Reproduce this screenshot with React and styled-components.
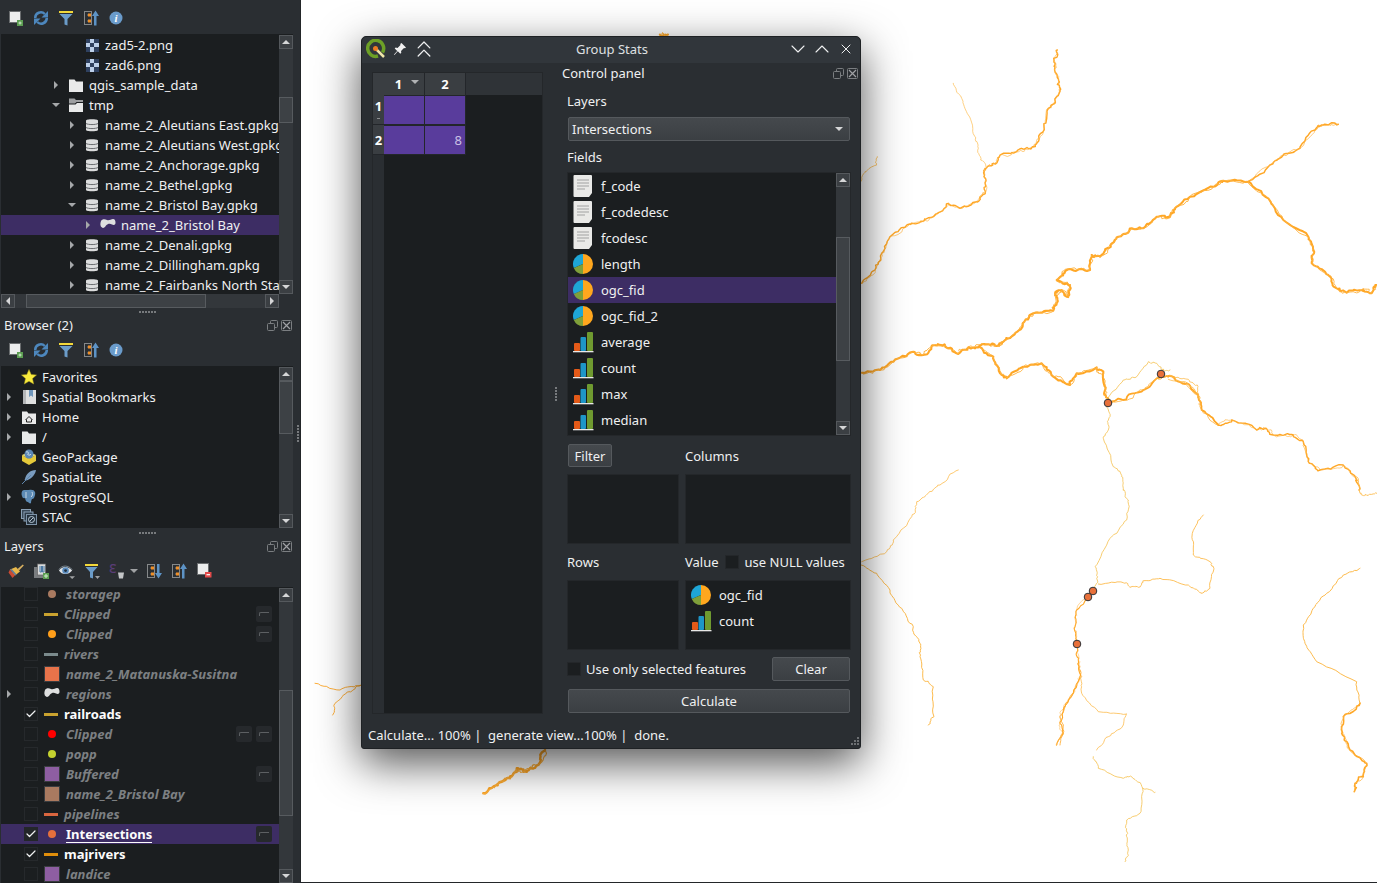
import React from "react";
import styled, { createGlobalStyle, css } from "styled-components";
import { ChevronDown, ChevronUp, ChevronsUp, X, Check } from "lucide-react";

const Global = createGlobalStyle`
  html, body { margin: 0; padding: 0; background: #2a2e32; overflow: hidden; }
  body { font-family: "Noto Sans", "Open Sans", sans-serif; font-size: 13px; color: #eff0f1; }
  * { box-sizing: border-box; }
`;

const Page = styled.div`display: flex; width: 1377px; height: 883px; overflow: hidden;`;

/* ---------- sidebar ---------- */
const Sidebar = styled.aside`display: flex; width: 300px; height: 883px; flex-shrink: 0; background: #2a2e32;`;
const Docks = styled.div`display: flex; flex-direction: column; width: 293px; padding-left: 1px;`;
const SideHandle = styled.div`display: flex; align-items: center; justify-content: flex-end; width: 7px; padding: 0 1px 15px 0;`;
const VDots = styled.div`
  width: 2px; height: ${p => p.$h}px;
  background: repeating-linear-gradient(180deg, #777a7d 0 2px, transparent 2px 3px);
`;
const Splitter = styled.div`display: flex; justify-content: center; align-items: center; height: ${p => p.$h}px; padding-right: 0;`;
const HDots = styled.div`width: 17px; height: 2px; background: repeating-linear-gradient(90deg, #777a7d 0 2px, transparent 2px 3px);`;
const DockTitle = styled.div`
  display: flex; align-items: center; justify-content: space-between; height: ${p => p.$h}px;
  padding: 0 1px 0 3px; line-height: 18px;
`;
const DockButtons = styled.div`display: flex; gap: 3px;`;
const Toolbar = styled.div`display: flex; align-items: center; gap: 9px; height: ${p => p.$h}px; padding: ${p => p.$pt || 0}px 0 0 7px; flex-shrink: 0;`;
const Caret = styled.span`
  width: 0; height: 0; margin: 0 -1px 0 -4px; border-left: 4px solid transparent; border-right: 4px solid transparent;
  border-top: 4px solid #a0a2a4;
`;
const Panel = styled.div`display: flex; height: ${p => p.$h}px; flex-shrink: 0; background: #1b1e20; overflow: hidden;`;
const List = styled.div`flex: 1; min-width: 0; overflow: hidden; padding-top: ${p => p.$top || 0}px; margin-top: ${p => p.$shift || 0}px;`;
const Row = styled.div`
  display: flex; align-items: center; height: 20px; line-height: 20px; padding-left: ${p => p.$pad}px; white-space: nowrap;
  background: ${p => (p.$sel ? "#3d2d64" : "transparent")};
  color: #eff0f1;
`;
const Arrow = styled.span`
  display: flex; align-items: center; justify-content: center; width: 16px; height: 16px; flex-shrink: 0;
  &::before {
    content: ""; display: ${p => (p.$kind ? "block" : "none")}; width: 0; height: 0; margin-right: 2px;
    ${p => p.$kind === "right" && css`border-top: 4px solid transparent; border-bottom: 4px solid transparent; border-left: 4px solid #a6a8aa;`}
    ${p => p.$kind === "down" && css`border-left: 4px solid transparent; border-right: 4px solid transparent; border-top: 4px solid #a6a8aa;`}
  }
`;
const RowIcon = styled.span`display: flex; width: 16px; height: 16px; margin: 0 5px 0 3px; flex-shrink: 0;`;

/* scrollbars */
const VBar = styled.div`display: flex; flex-direction: column; width: 14px; flex-shrink: 0; padding-top: 1px; background: #1b1e20;`;
const BarBtn = styled.div`
  display: flex; align-items: center; justify-content: center; width: 14px; height: 14px; flex-shrink: 0;
  background: #3b3f43; border: 1px solid #55595d;
`;
const UpTri = styled.span`width: 0; height: 0; border-left: 4px solid transparent; border-right: 4px solid transparent; border-bottom: 4px solid #d5d6d7;`;
const DownTri = styled.span`width: 0; height: 0; border-left: 4px solid transparent; border-right: 4px solid transparent; border-top: 4px solid #d5d6d7;`;
const LeftTri = styled.span`width: 0; height: 0; border-top: 4px solid transparent; border-bottom: 4px solid transparent; border-right: 4px solid #d5d6d7;`;
const RightTri = styled.span`width: 0; height: 0; border-top: 4px solid transparent; border-bottom: 4px solid transparent; border-left: 4px solid #d5d6d7;`;
const VTrack = styled.div`flex: 1; background: #33373b; min-height: 0; padding-top: ${p => p.$before}px;`;
const VThumb = styled.div`height: ${p => p.$size}px; background: #3d4145; border: 1px solid #575b5f;`;
const HBar = styled.div`display: flex; height: 14px; flex-shrink: 0; width: 278px; background: #33373b;`;
const HTrack = styled.div`flex: 1; padding-left: ${p => p.$before}px;`;
const HThumb = styled.div`width: ${p => p.$size}px; height: 14px; background: #3d4145; border: 1px solid #575b5f;`;

const Scroll = ({ before, size }) => (
  <VBar>
    <BarBtn><UpTri /></BarBtn>
    <VTrack $before={before}><VThumb $size={size} /></VTrack>
    <BarBtn><DownTri /></BarBtn>
  </VBar>
);

/* layers */
const LayerRow = styled(Row)`
  padding-left: 1px; padding-right: 7px;
  font-weight: 700; font-style: ${p => (p.$on ? "normal" : "italic")};
  color: ${p => (p.$on ? "#fcfcfc" : "#7d8083")};
`;
const Box = styled.span`
  display: flex; align-items: center; justify-content: center; width: 14px; height: 14px; margin: 0 6px 0 6px; flex-shrink: 0;
  background: ${p => (p.$sel ? "#232629" : "#1b1e20")}; border: 1px solid ${p => (p.$sel ? "#232629" : "#26292c")}; color: #eff0f1;
`;
const SymBox = styled.span`display: flex; align-items: center; width: ${p => (p.$line ? 20 : 22)}px; height: 16px; flex-shrink: 0;`;
const SymLine = styled.span`width: 14px; height: 3px; background: ${p => p.$c};`;
const SymDot = styled.span`width: 8px; height: 8px; margin-left: 4px; border-radius: 50%; background: ${p => p.$c};`;
const SymSquare = styled.span`width: 16px; height: 16px; background: ${p => p.$c}; border: 1px solid #3a3d40;`;
const LayerName = styled.span`${p => p.$active && css`border-bottom: 1px solid #fcfcfc; line-height: 16px; height: 17px; margin-top: 1px;`}`;
const Indicators = styled.span`display: flex; gap: 4px; margin-left: auto;`;
const Indicator = styled.span`
  display: flex; align-items: center; justify-content: center; width: 16px; height: 16px; border-radius: 2px; background: #26292c;
`;
const IndMark = styled.span`width: 10px; height: 4px; border: 1px solid #5d6063; border-width: 1px 0 0 1px; border-top-left-radius: 2px;`;

/* ---------- map ---------- */
const MapCanvas = styled.main`position: relative; flex: 1; height: 883px; background: #fff; border-left: 1px solid #232629; border-bottom: 1px solid #232629;`;
const MapSvg = styled.svg`display: block;`;

/* ---------- dialog ---------- */
const Dialog = styled.section`
  position: absolute; left: 60px; top: 36px; width: 500px; height: 713px; display: flex; flex-direction: column;
  background: #2a2e32; border-radius: 5px 5px 3px 3px; border: 1px solid #1e2124;
  box-shadow: 0 14px 44px rgba(0, 0, 0, .68);
`;
const TitleBar = styled.header`
  display: grid; grid-template-columns: 1fr auto 1fr; align-items: center; height: 26px; flex-shrink: 0; padding: 0 2px 2px 4px;
  background: #31363b; border-radius: 5px 5px 0 0;
`;
const TitleLeft = styled.div`display: flex; align-items: center; gap: 7px;`;
const TitleRight = styled.div`display: flex; align-items: center; justify-content: flex-end; color: #eff0f1;`;
const TitleBtn = styled.span`display: flex; align-items: center; justify-content: center; width: 24px; height: 24px;`;
const ShadeBtn = styled.span`display: flex; width: 28px; height: 24px; align-items: center; margin-left: -4px; color: #eff0f1;`;
const TitleText = styled.div`color: #dfe0e1;`;
const DialogBody = styled.div`display: flex; flex: 1; min-height: 0;`;
const TablePane = styled.div`
  display: grid; grid-template-columns: 11px 41px 41px 1fr; grid-template-rows: 22px 30px 30px 1fr;
  gap: 0; width: 171px; height: 642px; margin: 9px 0 0 10px; background: #1b1e20; border: 1px solid #24272a; flex-shrink: 0;
`;
const ColHead = styled.div`
  position: relative; display: flex; align-items: center; justify-content: center; font-weight: 700; background: #3a3e42; border-right: 1px solid #23262a; color: #fcfcfc;
  grid-column: ${p => p.$span || "auto"};
`;
const SortTri = styled.span`position: absolute; right: 5px; top: 7px; width: 0; height: 0; border-left: 4px solid transparent; border-right: 4px solid transparent; border-top: 4px solid #b0b2b4;`;
const HeadRest = styled.div`background: #2f3337;`;
const RowHead = styled.div`
  position: relative; display: flex; align-items: center; justify-content: center; font-weight: 700; background: #3a3e42; border-bottom: 1px solid #23262a; color: #fcfcfc; font-size: 13px;
  padding-bottom: ${p => (p.$sorted ? 8 : 0)}px;
  ${p => p.$sorted && css`
    &::after { content: ""; position: absolute; left: 4px; bottom: 5px; width: 3px; height: 1px; background: #8a8c8e; }
  `}
`;
const Cell = styled.div`
  display: flex; align-items: center; justify-content: flex-end; padding-right: 3px; background: #593c9c; color: #c9c0e4;
  border-right: 1px solid #23262a; border-bottom: 1px solid #23262a; border-top: 1px solid #23262a;
`;
const Gap = styled.div`grid-column: 4; grid-row: 2 / 5;`;
const HeadCol = styled.div`grid-column: 1; grid-row: 4; background: #2a2e32;`;
const MidHandle = styled.div`display: flex; align-items: center; justify-content: flex-start; width: 19px; padding: 14px 0 0 12px;`;
const ControlPane = styled.div`display: flex; flex-direction: column; width: 297px;`;
const PaneTitle = styled.div`display: flex; align-items: center; justify-content: space-between; height: 20px; padding-right: 1px; flex-shrink: 0;`;
const Content = styled.div`display: flex; flex-direction: column; padding-left: 5px; width: 289px; flex-shrink: 0;`;
const Label = styled.div`height: 18px; line-height: 18px; margin-top: ${p => p.$mt}px;`;
const Combo = styled.div`
  display: flex; align-items: center; justify-content: space-between; height: 24px; margin: 7px 1px 0; padding: 0 6px 0 3px;
  border-radius: 2px; border: 1px solid #55595d; background: linear-gradient(#45494d, #3b3f43);
`;
const FieldList = styled.div`display: flex; height: 264px; margin-top: 6px; background: #1b1e20; border: 1px solid #24272a; overflow: hidden;`;
const FieldRows = styled.div`flex: 1; min-width: 0;`;
const FieldRow = styled.div`
  display: flex; align-items: center; gap: 7px; height: 26px; padding-left: 4px; background: ${p => (p.$sel ? "#3d2d64" : "transparent")};
`;
const ListBar = styled(VBar)`padding-top: 0; margin-right: 0;`;
const TwoCol = styled.div`display: grid; grid-template-columns: 112px 166px; column-gap: 6px; margin-top: ${p => p.$mt}px; width: 284px; align-items: center;`;
const Btn = styled.button`
  height: ${p => p.$h || 24}px; width: ${p => (p.$w ? `${p.$w}px` : "auto")}; padding: 0; margin: 0; font: inherit; color: #eff0f1;
  border-radius: 2px; border: 1px solid #55595d; background: linear-gradient(#45494d, #3b3f43);
`;
const FilterBtn = styled(Btn)`margin-left: 1px;`;
const WellBox = styled.div`height: 70px; background: #1b1e20; border: 1px solid #24272a; padding: ${p => (p.$pad ? "1px 0 0 4px" : 0)};`;
const WellRow = styled.div`display: flex; align-items: center; gap: 7px; height: 26px;`;
const ValueHead = styled.div`display: flex; align-items: center; height: 18px;`;
const SmallBox = styled.span`
  display: inline-block; width: 14px; height: 14px; flex-shrink: 0; background: #1b1e20; border: 1px solid #24272a; margin: ${p => p.$m};
`;
const OptionsRow = styled.div`display: flex; align-items: center; height: 24px; margin: 7px 1px 0 0;`;
const ClearBtn = styled(Btn)`margin-left: auto;`;
const CalcBtn = styled(Btn)`margin: 8px 1px 0; flex-shrink: 0;`;
const StatusBar = styled.footer`position: relative; display: flex; align-items: center; height: 36px; padding: 10px 0 0 6px; flex-shrink: 0; white-space: pre;`;
const Grip = styled.svg`position: absolute; right: 1px; bottom: 1px;`;

/* ---------- icons ---------- */
const Ic = styled.svg`display: block; flex-shrink: 0;`;
const I = ({ children, s = 16, vb = "0 0 16 16" }) => <Ic width={s} height={s} viewBox={vb}>{children}</Ic>;

const AddIcon = () => (
  <I>
    <rect x="1.5" y="1.5" width="11" height="11" fill="#eceded" stroke="#6b6e70" />
    <rect x="9" y="10" width="6" height="6" fill="#5c9e52" />
    <path d="M10.5 13h3M12 11.5v3" stroke="#d5ecd0" strokeWidth="1" />
  </I>
);
const RefreshIcon = () => (
  <I>
    <path d="M2.2 8A5.6 5.6 0 0 1 11.800 4" fill="none" stroke="#4d87bd" strokeWidth="2.500" />
    <path d="M15 1v6.500H8.500z" fill="#4d87bd" />
    <path d="M13.800 8A5.600 5.600 0 0 1 4.200 12" fill="none" stroke="#4d87bd" strokeWidth="2.500" />
    <path d="M1 15V8.500h6.500z" fill="#4d87bd" />
  </I>
);
const FilterIcon = () => (
  <I>
    <rect x="1" y="1" width="14" height="2" fill="#f2d83a" />
    <path d="M1.5 4h13L9.5 9v6.5l-3-1V9z" fill="#6b9cc9" />
  </I>
);
const CollapseIcon = ({ down }) => (
  <I>
    <rect x="1.500" y="1.500" width="7" height="13" fill="none" stroke="#85888a" strokeWidth="1" />
    <path d="M4 5h2M4 11h2" stroke="#85888a" />
    <rect x="5" y="3.500" width="3" height="3" fill="#ef8f28" />
    <rect x="5" y="9.500" width="3" height="3" fill="#ef8f28" />
    {down
      ? <path d="M11 1h2.500v9H16l-3.500 5.500L9 10h2z" fill="#5d93c6" />
      : <path d="M12.500 .5L16 6h-2.500v9.500H11V6H9z" fill="#5d93c6" />}
  </I>
);
const InfoIcon = () => (
  <I>
    <circle cx="8" cy="8" r="6.5" fill="#6a9bcb" />
    <text x="8" y="12" textAnchor="middle" fontFamily="Liberation Serif" fontStyle="italic" fontWeight="700" fontSize="11" fill="#fff">i</text>
  </I>
);
const FloatIcon = () => (
  <I s={11} vb="0 0 11 11">
    <rect x="3.5" y=".5" width="7" height="7" rx="1" fill="none" stroke="#7b7e81" />
    <rect x=".5" y="3.5" width="7" height="7" rx="1" fill="#2a2e32" stroke="#7b7e81" />
  </I>
);
const CloseBox = () => (
  <I s={11} vb="0 0 11 11">
    <rect x=".5" y=".5" width="10" height="10" rx="1" fill="none" stroke="#7b7e81" />
    <path d="M2 2l7 7M9 2l-7 7" stroke="#a0a2a5" strokeWidth="1.2" />
  </I>
);
const ImageIcon = () => (
  <I>
    <rect x="2" y="2" width="13" height="13" fill="#c5d5e8" />
    <path d="M2 2h4v4H2zM10 2h5v4h-5zM6 6h4v4H6zM2 10h4v5H2zM10 10h5v5h-5z" fill="#2f4160" />
    <path d="M6 2h4v4H6zM2 6h4v4H2zM10 6h5v4h-5zM6 10h4v5H6z" fill="#bcd0ea" />
  </I>
);
const FolderIcon = () => (
  <I>
    <path d="M1 2.5h5.5L8 4.5h7V15H1z" fill="#e9eaea" />
  </I>
);
const FolderOpenIcon = () => (
  <I>
    <path d="M1 1.5h5.5L8 3h7v2H8.5L7 6.5H1z" fill="#9d9fa1" />
    <path d="M1 7.5h6.5L9 6h6v9H1z" fill="#e9eaea" />
  </I>
);
const DbIcon = () => (
  <I>
    <path d="M2 3.500C2 1.800 14 1.800 14 3.500v9.500c0 1.700-12 1.700-12 0z" fill="#dcdddd" />
    <path d="M2 6.500c2 1.400 10 1.400 12 0M2 10.500c2 1.400 10 1.400 12 0" stroke="#6a6d70" strokeWidth="1" fill="none" />
  </I>
);
const PolyIcon = () => (
  <I>
    <path d="M1 4c1-2 4-2 6-1 2 1 4-1 6-1 2 0 2.500 2 2.500 4 0 2-2 2.500-3.500 1.500-2-1-4-1-6 1-1 2-3 3-4 2-2-1-2-4-1-6.500z" fill="#dedfdf" />
  </I>
);
const StarIcon = () => (
  <I>
    <path d="M8 .5l2.2 5 5.3.5-4 3.6 1.2 5.4L8 12.2 3.3 15l1.2-5.4-4-3.6 5.3-.5z" fill="#f8ea3d" stroke="#a99a20" strokeWidth=".5" />
  </I>
);
const BookmarkIcon = () => (
  <I>
    <rect x="2" y="1" width="13" height="14" fill="#dfe0e0" />
    <rect x="2" y="1" width="3" height="14" fill="#b4b6b8" />
    <path d="M8 1h4v7l-2-1.5L8 8z" fill="#6f96bb" />
  </I>
);
const HomeIcon = () => (
  <I>
    <path d="M1 2.5h5l1.5 2H15V15H1z" fill="#e9eaea" />
    <path d="M4.5 11L8 7.5l3.5 3.5M5.5 10.5V13h5v-2.5" stroke="#222" strokeWidth="1" fill="none" />
  </I>
);
const GpkgIcon = () => (
  <I>
    <path d="M1 6l7 4 7-4v6l-7 4-7-4z" fill="#e5c93a" />
    <path d="M1 6l7-3 7 3-7 4z" fill="#f6e57a" />
    <circle cx="8" cy="5" r="4.5" fill="#5b87b5" />
    <path d="M5 3c2-1 3 1 2 2s2 2 3 0" stroke="#cfe0ee" strokeWidth="1" fill="none" />
  </I>
);
const FeatherIcon = () => (
  <I>
    <path d="M15 1C9 1 5 5 4 10l-.5 1 1 .5C9 11 14 7 15 1z" fill="#7a9cbf" />
    <path d="M10 6L1 15" stroke="#5f86ad" strokeWidth="1" />
  </I>
);
const PgIcon = () => (
  <I>
    <path d="M3 1c-2 0-3 3-2 6 .5 2 1.5 2.5 3 2 .5 2 1 4 3 4 1 1 2 2 3 1 0-2 .5-3 1-4 2 0 2.500-2 3-4 1-3-1-5-3-5-1-.5-2-.5-3 0C7 1 5 1 3 1z" fill="#5d8bb5" />
    <path d="M5 3v6M11 3c1 2 .5 4-1 5" stroke="#dfe8f0" strokeWidth=".8" fill="none" />
  </I>
);
const StacIcon = () => (
  <I>
    <rect x=".5" y=".5" width="9" height="9" fill="#3a4a5a" stroke="#8aa0b5" />
    <rect x="3" y="3" width="9" height="9" fill="#2d3b49" stroke="#8aa0b5" />
    <rect x="5.500" y="5.500" width="10" height="10" fill="#23303c" stroke="#7d93a8" />
    <circle cx="10.5" cy="10.500" r="3" fill="none" stroke="#b8c8d6" />
    <path d="M8.500 12.500l4-4" stroke="#b8c8d6" />
  </I>
);
const BrushIcon = () => (
  <I>
    <path d="M9.500 6L14.800 1.500l1 1-4.800 5z" fill="#d8b060" />
    <path d="M2 6.500L8 4l4 4.500L7 12.500z" fill="#e8b84a" />
    <path d="M2 6.500L7 12.500 4.500 15 .5 9.500z" fill="#cb4a32" />
    <path d="M3 6.500L8 12" stroke="#5f7a9c" strokeWidth="1.600" />
  </I>
);
const AddGroupIcon = () => (
  <I>
    <rect x="1" y="4" width="10" height="11" fill="#7a7d80" />
    <rect x="4.500" y="1" width="8" height="11" fill="#d9dbdc" stroke="#666" strokeWidth=".7" />
    <path d="M7 3v6h1.500V3M9.500 3v6H11V3" stroke="#4d7aa5" strokeWidth="1" fill="none" />
    <rect x="10" y="10" width="6" height="6" fill="#5c9e52" />
    <path d="M11 13h4M13 11v4" stroke="#d5ecd0" />
  </I>
);
const EyeIcon = () => (
  <I s={17} vb="0 0 18 16">
    <path d="M1 7c3-5 10-5 14 0-4 5-11 5-14 0z" fill="#dfe3e6" />
    <circle cx="8" cy="7" r="3.500" fill="#5b8cbe" />
    <circle cx="8" cy="7" r="1.500" fill="#20303f" />
    <path d="M1 6c3-5 10-5 14 0" stroke="#7f8b95" fill="none" />
    <path d="M12 13h6l-3 3z" fill="#a0a2a4" />
  </I>
);
const FilterDrop = () => (
  <I>
    <rect x="1" y="1" width="13" height="2" fill="#f2d83a" />
    <path d="M1.500 4h12L9 9v6.500l-3-1V9z" fill="#6b9cc9" />
    <path d="M11 13h5l-2.500 3z" fill="#a0a2a4" />
  </I>
);
const ExprIcon = () => (
  <I>
    <text x="0" y="10" fontFamily="Noto Sans" fontSize="16" fill="#5a3d78">ε</text>
    <path d="M9 9.500h6l-1 6h-4z" fill="#c3c5c7" />
  </I>
);
const RemoveIcon = () => (
  <I>
    <rect x="1.500" y=".5" width="11" height="11" fill="#eceded" stroke="#6b6e70" />
    <rect x="9" y="9" width="6.500" height="5.500" fill="#e34a4a" />
    <path d="M10.500 11.700h3.500" stroke="#fff" strokeWidth="1.200" />
  </I>
);
const DocIcon = () => (
  <I s={22} vb="0 0 22 22">
    <path d="M2.500 0h16.500a1 1 0 0 1 1 1v17l-3 4H2.500a1 1 0 0 1-1-1V1a1 1 0 0 1 1-1z" fill="#e9e9e7" />
    <path d="M5 5h12M5 8h12M5 11h12M5 14h8" stroke="#a0a1a1" strokeWidth="1" />
  </I>
);
const PieIcon = () => (
  <I s={22} vb="0 0 22 22">
    <path d="M11 1a10 10 0 0 1 0 20z" fill="#ffa71e" />
    <path d="M11 1a10 10 0 0 0-9.200 14L11 11z" fill="#1ea6d6" />
    <path d="M1.800 15A10 10 0 0 0 11 21V11z" fill="#7fa03a" />
  </I>
);
const BarsIcon = () => (
  <I s={22} vb="0 0 22 22">
    <rect x="2" y="12" width="6" height="8" rx="1" fill="#e45a18" />
    <rect x="8.500" y="6" width="5.500" height="14" rx="1" fill="#1e96c8" />
    <rect x="15" y="1" width="6" height="19" rx="1" fill="#6f9a30" />
    <rect x="1" y="20" width="20.500" height="1.300" fill="#e9e9e7" />
  </I>
);
const QgisLogo = () => (
  <I s={20} vb="0 0 20 20">
    <path d="M16.500 13.500A8 8 0 1 0 12 17" fill="none" stroke="#6da026" strokeWidth="3.500" />
    <path d="M9 9l9 9" stroke="#eee5a8" strokeWidth="2.500" />
    <circle cx="9.500" cy="9.500" r="2.500" fill="#ee7b22" />
  </I>
);
const PinIcon = () => (
  <I s={14} vb="0 0 14 14">
    <path d="M8.500 1l4.500 4.500-1 .8-1-.3L8 9l.3 1.800-1 1-2.500-2.500L1.500 13l-.5-.5 3.200-3.500L1.700 6.500l1-1L4.500 6l3-3-.3-1z" fill="#f0f0f0" />
  </I>
);

/* ---------- map data ---------- */
const mk = (ox, oy, a) => {
  const o = [];
  for (let i = 0; i < a.length; i += 2) o.push([ox + a[i] / 3, oy + a[i + 1] / 3]);
  return o;
};
const wig = (pts, seed, amp, depth = 3) => {
  let s = seed * 9301 + 17;
  const r = () => (s = (s * 16807) % 2147483647) / 2147483647 - 0.5;
  let p = pts, a = amp;
  for (let d = 0; d < depth; d++) {
    const n = [p[0]];
    for (let i = 0; i < p.length - 1; i++) {
      n.push([(p[i][0] + p[i + 1][0]) / 2 + r() * a, (p[i][1] + p[i + 1][1]) / 2 + r() * a], p[i + 1]);
    }
    p = n; a *= 0.8;
  }
  return "M" + p.map(q => q[0].toFixed(1) + " " + q[1].toFixed(1)).join("L");
};
const T = 1, U = 0; // T: zoom frame at y=40, U: zoom frame at y=460
const f = (frame, a) => mk(860, frame === T ? 40 : 460, a);
const THIN = "#fdbb4d";
const RIVERS = [
  { w: 2.1, p: f(T, [5,998,60,990,100,965,160,935,190,945,215,918,255,915,295,942,325,922,370,912,410,918,430,905,465,880,490,848,520,820,580,812,590,790,585,760,605,750,625,768,630,735,590,720,625,688,690,690,695,645,720,650,745,625,775,590,815,565,850,565,890,530,930,530,945,505,990,470,1060,440,1090,422,1165,425]) },
  { w: 1.5, p: f(T, [1165,425,1225,380,1270,345,1320,325,1365,270,1390,255,1435,253]) },
  { w: 2, p: f(T, [1165,425,1225,475,1270,540,1345,590,1362,640,1355,670,1405,705,1430,745,1460,758,1510,748,1535,760,1550,735]) },
  { w: 2.1, p: f(T, [360,922,400,950,420,1000,440,1015,490,980,545,970,580,1010,630,1035,650,1000,710,982,730,1000,735,1050,743,1088]) },
  { w: 1.8, p: f(T, [743,1088,790,1080,850,1050,890,1015,925,1008,980,1030,1015,1065,1025,1110,1075,1155]) },
  { w: 1.4, p: f(T, [1075,1155,1115,1140,1190,1170,1215,1165,1240,1185,1300,1185,1330,1205,1345,1265,1380,1290,1450,1275,1490,1320,1497,1350]) },
  { w: .9, c: THIN, p: f(U, [1490,50,1500,100,1520,105,1550,100]) },
  { w: .8, c: "#f5c04e", p: f(T, [743,1075,790,1020,830,1010,865,965,890,970,910,990,930,990]) },
  { w: .8, c: THIN, p: f(T, [930,1005,985,1018,1012,1035,1020,1075]) },
  { w: .8, c: THIN, p: f(T, [925,1018,975,1025,1005,1050,1018,1080]) },
  { w: 1.4, p: f(T, [592,30,582,60,585,95,598,125,600,150,585,190,565,205,552,260,530,310,510,325,470,335,420,345,400,370,378,385,372,410,376,460,350,485,300,505,265,490,220,530,185,545,150,552,90,590,65,640,45,690,5,730]) },
  { w: .7, c: THIN, p: f(T, [280,130,305,175,325,225,345,290,355,325,362,360,378,380]) },
  { w: .8, c: THIN, p: f(T, [52,350,50,375,15,395,2,425]) },
  { w: .8, c: "#f5c04e", p: f(T, [743,1088,750,1130,745,1170,730,1195,760,1280,785,1310,790,1350]) },
  { w: .8, c: "#f5c04e", p: f(U, [790,90,805,120,800,180,750,235,705,320,712,360,700,390]) },
  { w: .8, c: THIN, p: f(U, [295,30,240,75,205,100,170,125,155,170,100,240,80,275,5,305]) },
  { w: 1, c: THIN, p: f(U, [3,315,50,340,90,390,125,445,160,500,180,550,180,590,190,660,220,680,222,770,205,795]) },
  { w: 1.1, p: f(U, [700,390,650,450,645,500,650,552,655,600,660,650,640,700,610,750,600,790,610,820,590,855]) },
  { w: .8, p: f(U, [655,610,665,650,630,710,600,770,612,815,600,855]) },
  { w: .8, c: THIN, p: f(U, [660,650,665,700,715,755,800,762,790,795,745,830,710,870]) },
  { w: .8, c: "#f5c04e", p: f(U, [700,890,715,925,790,955,815,950,848,985,885,997]) },
  { w: .8, c: "#f5c04e", p: f(U, [848,985,840,1060,800,1080,800,1130,805,1170,795,1205]) },
  { w: .9, c: THIN, p: f(U, [715,372,790,368,810,382,835,382,850,362,900,355,985,375,1025,400,1050,385,1060,320,1050,305,1000,285,997,220,1030,165]) },
  { w: 1, c: THIN, p: f(U, [1500,325,1450,345,1400,400,1365,440,1330,495,1335,550,1370,605,1490,665,1500,730]) },
  { w: 1.6, p: f(U, [1500,730,1450,770,1445,820,1470,870,1520,910,1510,950,1485,970,1483,995]) },
  { w: .9, p: mk(300, 660, [45,70,120,90,185,75]) },
  { w: .9, p: mk(300, 660, [185,75,150,95,105,130,98,165]) },
  { w: 2.4, p: mk(300, 660, [735,270,715,315,690,325,670,335,650,328,630,355,612,362,590,375,550,400]) },
  { w: 2, p: [[660, 34.5], [668, 34.5]] },
];
const POINTS = [[1108, 403], [1161, 374], [1093, 591], [1088, 597], [1077, 644]];

const MapDrawing = () => (
  <MapSvg width="1076" height="882" viewBox="301 0 1076 882">
    {RIVERS.map((r, i) => (
      <g key={i} fill="none" strokeLinejoin="round" strokeLinecap="round">
        <path d={wig(r.p, i + 3, r.w > 1.2 ? 3.6 : 2.6)} stroke={r.c || "#ffa726"} strokeWidth={r.w} />
        {r.w > 1 && <path d={wig(r.p, i + 41, 4)} stroke="#ffb23e" strokeWidth={r.w * 0.45} />}
      </g>
    ))}
    {POINTS.map(([x, y]) => (
      <circle key={x} cx={x} cy={y} r="3.8" fill="#e8703a" stroke="#2f3338" strokeWidth="1" />
    ))}
  </MapSvg>
);

/* ---------- data ---------- */
const TOP_TREE = [
  { pad: 64, icon: <ImageIcon />, text: "zad5-2.png" },
  { pad: 64, icon: <ImageIcon />, text: "zad6.png" },
  { pad: 48, arrow: "right", icon: <FolderIcon />, text: "qgis_sample_data" },
  { pad: 48, arrow: "down", icon: <FolderOpenIcon />, text: "tmp" },
  { pad: 64, arrow: "right", icon: <DbIcon />, text: "name_2_Aleutians East.gpkg" },
  { pad: 64, arrow: "right", icon: <DbIcon />, text: "name_2_Aleutians West.gpkg" },
  { pad: 64, arrow: "right", icon: <DbIcon />, text: "name_2_Anchorage.gpkg" },
  { pad: 64, arrow: "right", icon: <DbIcon />, text: "name_2_Bethel.gpkg" },
  { pad: 64, arrow: "down", icon: <DbIcon />, text: "name_2_Bristol Bay.gpkg" },
  { pad: 80, arrow: "right", icon: <PolyIcon />, text: "name_2_Bristol Bay", sel: true },
  { pad: 64, arrow: "right", icon: <DbIcon />, text: "name_2_Denali.gpkg" },
  { pad: 64, arrow: "right", icon: <DbIcon />, text: "name_2_Dillingham.gpkg" },
  { pad: 64, arrow: "right", icon: <DbIcon />, text: "name_2_Fairbanks North Star.gpkg" },
];
const BROWSER = [
  { icon: <StarIcon />, text: "Favorites" },
  { arrow: "right", icon: <BookmarkIcon />, text: "Spatial Bookmarks" },
  { arrow: "right", icon: <HomeIcon />, text: "Home" },
  { arrow: "right", icon: <FolderIcon />, text: "/" },
  { icon: <GpkgIcon />, text: "GeoPackage" },
  { icon: <FeatherIcon />, text: "SpatiaLite" },
  { arrow: "right", icon: <PgIcon />, text: "PostgreSQL" },
  { icon: <StacIcon />, text: "STAC" },
];
const LAYERS = [
  { n: "storagep", k: "dot", c: "#a97a60" },
  { n: "Clipped", k: "line", c: "#c9a22f", ind: 1 },
  { n: "Clipped", k: "dot", c: "#ff9f1a", ind: 1 },
  { n: "rivers", k: "line", c: "#7b8a8c" },
  { n: "name_2_Matanuska-Susitna", k: "square", c: "#e8734a" },
  { n: "regions", k: "poly", arrow: true },
  { n: "railroads", k: "line", c: "#c9a22f", on: true },
  { n: "Clipped", k: "dot", c: "#ff0000", ind: 2 },
  { n: "popp", k: "dot", c: "#c4d22f" },
  { n: "Buffered", k: "square", c: "#8e5ea2", ind: 1 },
  { n: "name_2_Bristol Bay", k: "square", c: "#a97a60" },
  { n: "pipelines", k: "line", c: "#d9663f" },
  { n: "Intersections", k: "dot", c: "#e5703c", on: true, sel: true, ind: 1 },
  { n: "majrivers", k: "line", c: "#e08e0b", on: true },
  { n: "landice", k: "square", c: "#8e5ea2" },
];
const FIELDS = [
  ["f_code", "doc"], ["f_codedesc", "doc"], ["fcodesc", "doc"], ["length", "pie"], ["ogc_fid", "pie", true],
  ["ogc_fid_2", "pie"], ["average", "bars"], ["count", "bars"], ["max", "bars"], ["median", "bars"],
];
const FIELD_ICON = { doc: <DocIcon />, pie: <PieIcon />, bars: <BarsIcon /> };

const Symbol = ({ l }) => {
  if (l.k === "line") return <SymBox $line><SymLine $c={l.c} /></SymBox>;
  if (l.k === "dot") return <SymBox><SymDot $c={l.c} /></SymBox>;
  if (l.k === "square") return <SymBox><SymSquare $c={l.c} /></SymBox>;
  return <SymBox><PolyIcon /></SymBox>;
};

const BrowserTools = () => (
  <>
    <AddIcon /><RefreshIcon /><FilterIcon /><CollapseIcon /><InfoIcon />
  </>
);
const DockBtns = () => <DockButtons><FloatIcon /><CloseBox /></DockButtons>;

export default function App() {
  return (
    <Page>
      <Global />
      <Sidebar>
        <Docks>
          <Toolbar $h={34} $pt={2}><BrowserTools /></Toolbar>
          <Panel $h={260}>
            <List $top={1}>
              {TOP_TREE.map(r => (
                <Row key={r.text} $pad={r.pad} $sel={r.sel}>
                  <Arrow $kind={r.arrow} /><RowIcon>{r.icon}</RowIcon>{r.text}
                </Row>
              ))}
            </List>
            <Scroll before={48} size={26} />
          </Panel>
          <HBar>
            <BarBtn><LeftTri /></BarBtn>
            <HTrack $before={11}><HThumb $size={180} /></HTrack>
            <BarBtn><RightTri /></BarBtn>
          </HBar>
          <Splitter $h={8}><HDots /></Splitter>
          <DockTitle $h={18}>Browser (2)<DockBtns /></DockTitle>
          <Toolbar $h={32}><BrowserTools /></Toolbar>
          <Panel $h={162}>
            <List $top={1}>
              {BROWSER.map(r => (
                <Row key={r.text} $pad={1}>
                  <Arrow $kind={r.arrow} /><RowIcon>{r.icon}</RowIcon>{r.text}
                </Row>
              ))}
            </List>
            <Scroll before={0} size={53} />
          </Panel>
          <Splitter $h={9}><HDots /></Splitter>
          <DockTitle $h={18}>Layers<DockBtns /></DockTitle>
          <Toolbar $h={32}>
            <BrushIcon /><AddGroupIcon /><EyeIcon /><FilterDrop /><ExprIcon /><Caret />
            <CollapseIcon down /><CollapseIcon /><RemoveIcon />
          </Toolbar>
          <Panel $h={296}>
            <List $shift={-3}>
              {LAYERS.map((l, i) => (
                <LayerRow key={i} $pad={1} $on={l.on} $sel={l.sel}>
                  <Arrow $kind={l.arrow ? "right" : undefined} />
                  <Box $sel={l.sel}>{l.on && <Check size={12} strokeWidth={2.4} />}</Box>
                  <Symbol l={l} />
                  <LayerName $active={l.sel}>{l.n}</LayerName>
                  {l.ind && (
                    <Indicators>
                      {Array.from({ length: l.ind }, (_, j) => <Indicator key={j}><IndMark /></Indicator>)}
                    </Indicators>
                  )}
                </LayerRow>
              ))}
            </List>
            <Scroll before={88} size={126} />
          </Panel>
        </Docks>
        <SideHandle><VDots $h={18} /></SideHandle>
      </Sidebar>

      <MapCanvas>
        <MapDrawing />
        <Dialog>
          <TitleBar>
            <TitleLeft>
              <QgisLogo /><PinIcon />
              <ShadeBtn><ChevronsUp size={28} strokeWidth={1.1} /></ShadeBtn>
            </TitleLeft>
            <TitleText>Group Stats</TitleText>
            <TitleRight>
              <TitleBtn><ChevronDown size={24} strokeWidth={1.1} /></TitleBtn>
              <TitleBtn><ChevronUp size={24} strokeWidth={1.1} /></TitleBtn>
              <TitleBtn><X size={16} strokeWidth={1.5} /></TitleBtn>
            </TitleRight>
          </TitleBar>
          <DialogBody>
            <TablePane>
              <ColHead $span="1 / 3">1<SortTri /></ColHead>
              <ColHead>2</ColHead>
              <HeadRest />
              <RowHead $sorted>1</RowHead>
              <Cell /><Cell />
              <Gap />
              <RowHead>2</RowHead>
              <Cell /><Cell>8</Cell>
              <HeadCol />
            </TablePane>
            <MidHandle><VDots $h={15} /></MidHandle>
            <ControlPane>
              <PaneTitle>Control panel<DockBtns /></PaneTitle>
              <Content>
                <Label $mt={9}>Layers</Label>
                <Combo>Intersections<DownTri /></Combo>
                <Label $mt={7}>Fields</Label>
                <FieldList>
                  <FieldRows>
                    {FIELDS.map(([n, k, sel]) => (
                      <FieldRow key={n} $sel={sel}>{FIELD_ICON[k]}{n}</FieldRow>
                    ))}
                  </FieldRows>
                  <ListBar>
                    <BarBtn><UpTri /></BarBtn>
                    <VTrack $before={50}><VThumb $size={124} /></VTrack>
                    <BarBtn><DownTri /></BarBtn>
                  </ListBar>
                </FieldList>
                <TwoCol $mt={8}>
                  <div><FilterBtn $h={23} $w={44}>Filter</FilterBtn></div>
                  <div>Columns</div>
                </TwoCol>
                <TwoCol $mt={7}><WellBox /><WellBox /></TwoCol>
                <TwoCol $mt={9}>
                  <div>Rows</div>
                  <ValueHead>Value<SmallBox $m="0 6px 0 6px" />use NULL values</ValueHead>
                </TwoCol>
                <TwoCol $mt={9}>
                  <WellBox />
                  <WellBox $pad>
                    <WellRow><PieIcon />ogc_fid</WellRow>
                    <WellRow><BarsIcon />count</WellRow>
                  </WellBox>
                </TwoCol>
                <OptionsRow>
                  <SmallBox $m="0 5px 0 0" />Use only selected features
                  <ClearBtn $w={78}>Clear</ClearBtn>
                </OptionsRow>
                <CalcBtn>Calculate</CalcBtn>
              </Content>
            </ControlPane>
          </DialogBody>
          <StatusBar>
            {"Calculate... 100% |  generate view...100% |  done."}
            <Grip width="12" height="12" viewBox="0 0 12 12">
              <path d="M10 2h2v2h-2zM7 5h2v2H7zM10 5h2v2h-2zM4 8h2v2H4zM7 8h2v2H7zM10 8h2v2h-2z" fill="#6d7073" />
            </Grip>
          </StatusBar>
        </Dialog>
      </MapCanvas>
    </Page>
  );
}
